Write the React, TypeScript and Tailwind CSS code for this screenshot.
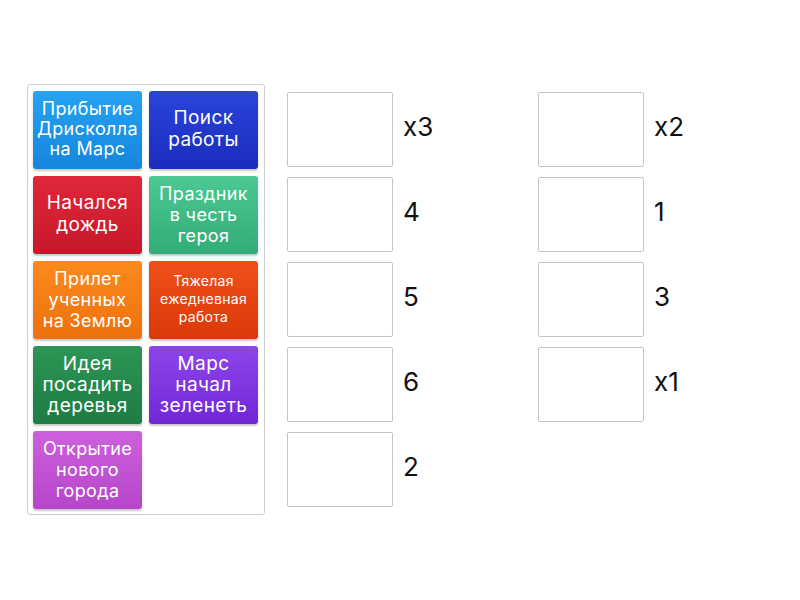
const tiles = [
  { lines: ['Прибытие', 'Дрисколла', 'на Марс'], bg: 'bg-gradient-to-b from-[#25a3f3] to-[#1685dc]', size: 'text-[18px] leading-[20px]' },
  { lines: ['Поиск', 'работы'], bg: 'bg-gradient-to-b from-[#2a44da] to-[#1a2cbd]', size: 'text-[19px] leading-[22px]' },
  { lines: ['Начался', 'дождь'], bg: 'bg-gradient-to-b from-[#e02739] to-[#c6182b]', size: 'text-[19px] leading-[22px]' },
  { lines: ['Праздник', 'в честь', 'героя'], bg: 'bg-gradient-to-b from-[#4cc893] to-[#32ad77]', size: 'text-[18px] leading-[21px]' },
  { lines: ['Прилет', 'ученных', 'на Землю'], bg: 'bg-gradient-to-b from-[#fb8a1c] to-[#ef700c]', size: 'text-[18px] leading-[21px]' },
  { lines: ['Тяжелая', 'ежедневная', 'работа'], bg: 'bg-gradient-to-b from-[#ef5019] to-[#db3808]', size: 'text-[14px] leading-[18px]' },
  { lines: ['Идея', 'посадить', 'деревья'], bg: 'bg-gradient-to-b from-[#2d9556] to-[#1d7c42]', size: 'text-[19px] leading-[21px]' },
  { lines: ['Марс', 'начал', 'зеленеть'], bg: 'bg-gradient-to-b from-[#8f44ea] to-[#7126d6]', size: 'text-[19px] leading-[21px]' },
  { lines: ['Открытие', 'нового', 'города'], bg: 'bg-gradient-to-b from-[#cd60dc] to-[#b645ca]', size: 'text-[18px] leading-[21px]' },
]

const left = ['x3', '4', '5', '6', '2']
const right = ['x2', '1', '3', 'x1']

function Slot({ label }: { label: string }) {
  return (
    <div className="flex items-center h-[75px]">
      <div className="w-[106px] h-[75px] border border-[#c4c4c4] rounded-[2px] bg-white" />
      <span className="ml-[10px] text-[26px] leading-none text-[#111] pb-[6px]">{label}</span>
    </div>
  )
}

export default function App() {
  return (
    <div
      className="w-[800px] h-[600px] bg-white flex items-start"
      style={{ fontFamily: 'Inter, Roboto, sans-serif' }}
    >
      <div className="ml-[27px] mt-[84px] w-[238px] border border-[#cfcfcf] rounded-[3px] px-[5px] pt-[6px] pb-[5px]">
        <div className="grid grid-cols-[109px_109px] gap-[7px]">
          {tiles.map((t) => (
            <div
              key={t.lines.join(' ')}
              className={`${t.bg} h-[78px] rounded-[3px] shadow-[0_2px_2px_rgba(0,0,0,0.22)] flex flex-col items-center justify-center text-center text-white tracking-[0.02em] whitespace-nowrap pb-[2px] ${t.size}`}
            >
              {t.lines.map((l) => (
                <span key={l}>{l}</span>
              ))}
            </div>
          ))}
        </div>
      </div>

      <div className="ml-[22px] mt-[92px] w-[251px] flex flex-col gap-[10px]">
        {left.map((l) => (
          <Slot key={l} label={l} />
        ))}
      </div>

      <div className="mt-[92px] flex flex-col gap-[10px]">
        {right.map((l) => (
          <Slot key={l} label={l} />
        ))}
      </div>
    </div>
  )
}
